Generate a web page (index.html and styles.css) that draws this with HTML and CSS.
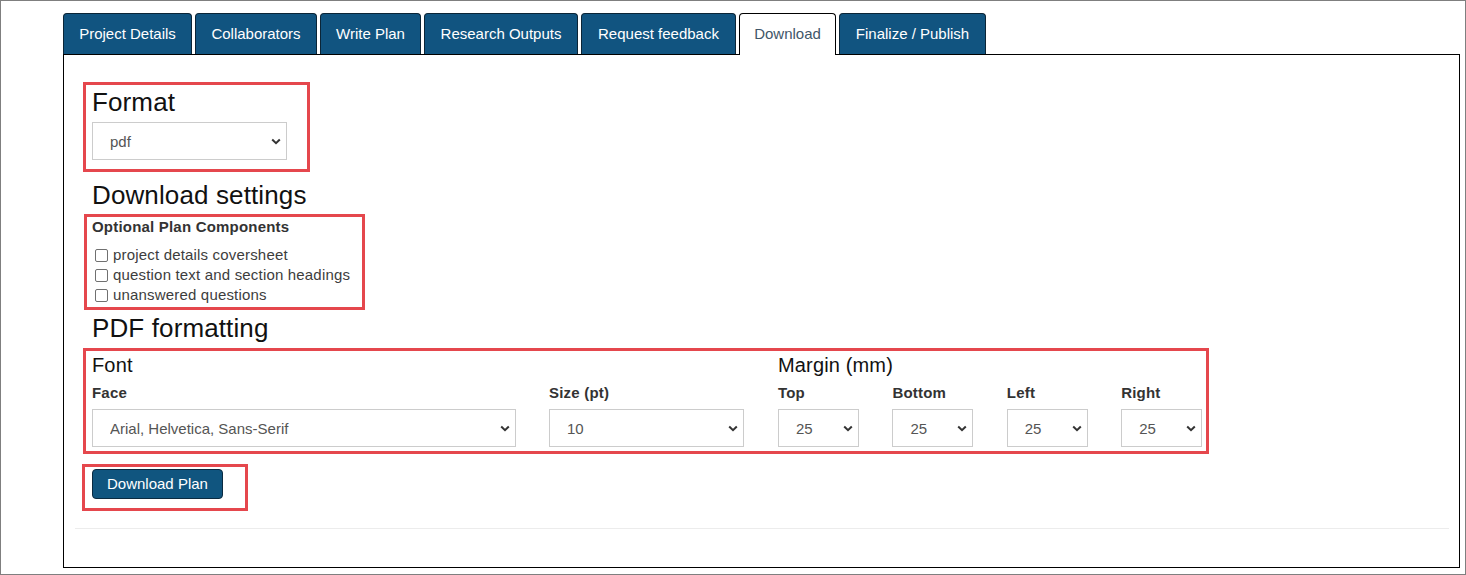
FILE: index.html
```html
<!DOCTYPE html>
<html lang="en">
<head>
<meta charset="utf-8">
<title>Download plan</title>
<link rel="stylesheet" href="styles.css">
</head>
<body>
<div class="frame">
  <ul class="tabs">
    <li class="tab tab-details">Project Details</li>
    <li class="tab tab-collab">Collaborators</li>
    <li class="tab tab-write">Write Plan</li>
    <li class="tab tab-outputs">Research Outputs</li>
    <li class="tab tab-feedback">Request feedback</li>
    <li class="tab tab-download active">Download</li>
    <li class="tab tab-publish">Finalize / Publish</li>
  </ul>
  <div class="panel">
    <div class="anno anno-format">
      <h2 class="heading">Format</h2>
      <span class="select select-format">
        <select><option>pdf</option></select>
        <svg viewBox="0 0 10 7"><path d="M1.2 1.5 L5 5.2 L8.8 1.5"/></svg>
      </span>
    </div>
    <h2 class="heading heading-settings">Download settings</h2>
    <div class="anno anno-settings">
      <div class="lbl lbl-group">Optional Plan Components</div>
      <label class="check"><input type="checkbox">project details coversheet</label>
      <label class="check"><input type="checkbox">question text and section headings</label>
      <label class="check"><input type="checkbox">unanswered questions</label>
    </div>
    <h2 class="heading heading-pdf">PDF formatting</h2>
    <div class="anno anno-pdf">
      <div class="fmt-row">
        <div class="font-col">
          <h3 class="subheading">Font</h3>
          <div class="fields">
            <div class="field field-face">
              <div class="lbl">Face</div>
              <span class="select">
                <select><option>Arial, Helvetica, Sans-Serif</option></select>
                <svg viewBox="0 0 10 7"><path d="M1.2 1.5 L5 5.2 L8.8 1.5"/></svg>
              </span>
            </div>
            <div class="field field-size">
              <div class="lbl">Size (pt)</div>
              <span class="select">
                <select><option>10</option></select>
                <svg viewBox="0 0 10 7"><path d="M1.2 1.5 L5 5.2 L8.8 1.5"/></svg>
              </span>
            </div>
          </div>
        </div>
        <div class="margin-col">
          <h3 class="subheading">Margin (mm)</h3>
          <div class="fields fields-margin">
            <div class="field field-margin">
              <div class="lbl">Top</div>
              <span class="select">
                <select><option>25</option></select>
                <svg viewBox="0 0 10 7"><path d="M1.2 1.5 L5 5.2 L8.8 1.5"/></svg>
              </span>
            </div>
            <div class="field field-margin">
              <div class="lbl">Bottom</div>
              <span class="select">
                <select><option>25</option></select>
                <svg viewBox="0 0 10 7"><path d="M1.2 1.5 L5 5.2 L8.8 1.5"/></svg>
              </span>
            </div>
            <div class="field field-margin">
              <div class="lbl">Left</div>
              <span class="select">
                <select><option>25</option></select>
                <svg viewBox="0 0 10 7"><path d="M1.2 1.5 L5 5.2 L8.8 1.5"/></svg>
              </span>
            </div>
            <div class="field field-margin">
              <div class="lbl">Right</div>
              <span class="select">
                <select><option>25</option></select>
                <svg viewBox="0 0 10 7"><path d="M1.2 1.5 L5 5.2 L8.8 1.5"/></svg>
              </span>
            </div>
          </div>
        </div>
      </div>
    </div>
    <div class="anno anno-btn">
      <button class="btn" type="button">Download Plan</button>
    </div>
    <div class="divider"></div>
  </div>
</div>
</body>
</html>
```
FILE: styles.css
```css
* { box-sizing: border-box; }
html, body { margin: 0; padding: 0; background: #fff; }
body { font-family: "Liberation Sans", Arial, sans-serif; color: #111; }

.frame {
  width: 1466px;
  height: 575px;
  border: 1px solid #7f7f7f;
  padding: 12px 5px 0 62px;
  overflow: hidden;
}

/* Tabs */
.tabs {
  display: flex;
  align-items: flex-end;
  gap: 3px;
  list-style: none;
  margin: 0;
  padding: 0;
  height: 41px;
}
.tab {
  height: 41px;
  display: flex;
  align-items: center;
  justify-content: center;
  padding-bottom: 2px;
  background: #115480;
  color: #fff;
  font-size: 15px;
  border: 1px solid #0b2537;
  border-bottom: 0;
  border-radius: 4px 4px 0 0;
  white-space: nowrap;
}
.tab-details { width: 129px; }
.tab-collab { width: 122px; }
.tab-write { width: 101px; }
.tab-outputs { width: 154px; }
.tab-feedback { width: 155px; }
.tab-download { width: 97px; }
.tab-publish { width: 147px; }
.tab.active {
  background: #fff;
  color: #3f5669;
  border-color: #000;
  height: 42px;
  margin-bottom: -1px;
  padding-bottom: 3px;
  position: relative;
  z-index: 1;
}

/* Panel */
.panel {
  height: 514px;
  border: 1px solid #000;
  padding: 0 10px 0 28px;
}

.anno { border: 3px solid #e5474d; }

.heading {
  margin: 0;
  font-size: 26px;
  line-height: 29px;
  font-weight: normal;
  letter-spacing: 0.12px;
  color: #111;
}
.heading-settings { margin-top: 9px; }
.heading-pdf { margin-top: 4px; }

.subheading {
  margin: 0;
  font-size: 20px;
  line-height: 22px;
  font-weight: normal;
  letter-spacing: 0.15px;
  color: #111;
}

.anno-format {
  width: 227px;
  margin: 27px 0 0 -9px;
  padding: 3px 0 9px 6px;
}
.select-format { width: 195px; margin-top: 5px; }

.anno-settings {
  width: 281px;
  margin: 4px 0 0 -8px;
  padding: 0 0 2px 5px;
}

.lbl {
  font-size: 15px;
  line-height: 20px;
  font-weight: bold;
  letter-spacing: 0.2px;
  color: #333;
}
.lbl-group { margin-bottom: 8px; }

.check {
  display: block;
  font-size: 15px;
  line-height: 20px;
  letter-spacing: 0.18px;
  color: #3d3d3d;
}
.check input {
  appearance: none;
  -webkit-appearance: none;
  width: 13px;
  height: 13px;
  border: 1px solid #707070;
  border-radius: 2px;
  background: #fff;
  margin: 0 5px 0 3px;
  vertical-align: middle;
  position: relative;
  top: -1px;
}

.anno-pdf {
  width: 1126px;
  margin: 5px 0 0 -9px;
  padding: 3px 0 4px 6px;
}
.fmt-row { display: flex; }
.font-col { width: 652px; }
.margin-col { margin-left: 34px; }
.fields { display: flex; gap: 33px; margin-top: 7px; }
.fields-margin { gap: 33.4px; }
.field-face { width: 424px; }
.field-size { width: 195px; }
.field-margin { width: 81px; }
.field .select { margin-top: 6px; }

.select {
  position: relative;
  display: block;
}
.select select {
  appearance: none;
  -webkit-appearance: none;
  display: block;
  width: 100%;
  height: 38px;
  border: 1px solid #ccc;
  border-radius: 0;
  background: #fff;
  font-family: "Liberation Sans", Arial, sans-serif;
  font-size: 15px;
  color: #555;
  padding: 0 22px 0 17px;
  margin: 0;
}
.select svg {
  position: absolute;
  right: 6px;
  top: 50%;
  width: 10px;
  height: 7px;
  margin-top: -3px;
  pointer-events: none;
}
.select svg path {
  fill: none;
  stroke: #333;
  stroke-width: 2;
}

.anno-btn {
  width: 166px;
  margin: 10px 0 0 -10px;
  padding: 2px 0 9px 7px;
}
.btn {
  height: 30px;
  padding: 0 14px;
  background: #10557f;
  color: #fff;
  border: 1px solid #0a2a40;
  border-radius: 4px;
  font-family: "Liberation Sans", Arial, sans-serif;
  font-size: 15px;
  line-height: 28px;
}

.divider {
  height: 1px;
  background: #ececec;
  margin: 17px 0 0 -17px;
}
```
